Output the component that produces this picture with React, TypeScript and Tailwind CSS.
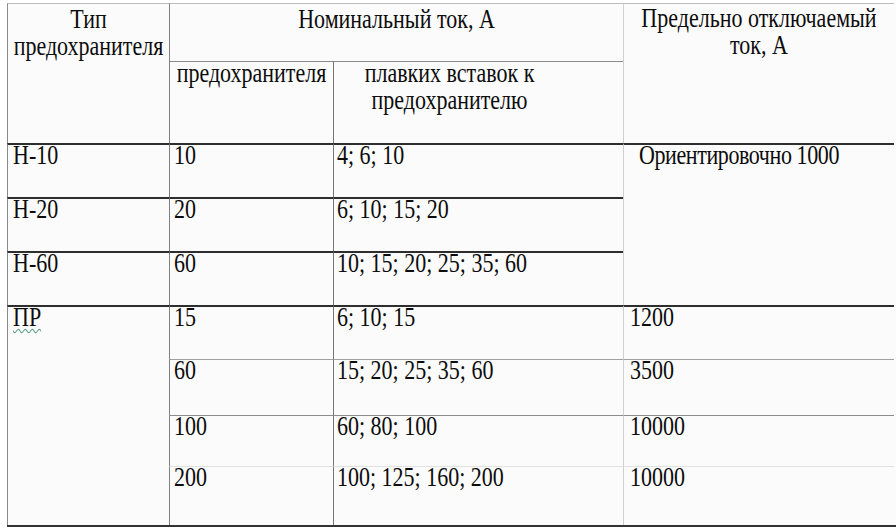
import React from "react";

// text in the picture is stretched vertically, so each cell's text is scaled on Y
const txt = "origin-top scale-y-[1.2] leading-[23px] whitespace-nowrap";

const heavy = "border-t-2 border-t-[#2e2e2e]";

interface CellProps {
  className?: string;
  inner?: string;
  children?: React.ReactNode;
}

function Cell({ className = "", inner = "", children }: CellProps) {
  return (
    <div className={`border-l border-l-[#8a8a8a] ${className}`}>
      <div className={`${txt} ${inner}`}>{children}</div>
    </div>
  );
}

const rows = [
  { type: "Н-10", fuse: "10", links: "4; 6; 10" },
  { type: "Н-20", fuse: "20", links: "6; 10; 15; 20" },
  { type: "Н-60", fuse: "60", links: "10; 15; 20; 25; 35; 60" },
];

const pr = [
  { fuse: "15", links: "6; 10; 15", max: "1200", line: heavy },
  { fuse: "60", links: "15; 20; 25; 35; 60", max: "3500", line: "border-t border-t-[#a0a0a0]" },
  { fuse: "100", links: "60; 80; 100", max: "10000", line: "border-t border-t-[#8c8c8c]" },
  { fuse: "200", links: "100; 125; 160; 200", max: "10000", line: "border-t border-t-[#e2e2e2]" },
];

export default function App() {
  return (
    <div className="w-[896px] h-[532px] bg-white pt-[3px] pl-[7px] text-[22px] text-[#0c0c0c] font-['Liberation_Serif','Times_New_Roman',serif] overflow-hidden">
      <div className="grid grid-cols-[162px_164px_290px_271px] grid-rows-[58px_82px_54px_54px_54px_54px_56px_51px_59px] bg-[#fbfbfb] border-b-2 border-b-[#333]">
        {/* header */}
        <Cell className="row-span-2 border-t border-t-[#bdbdbd]" inner="text-center mt-[1px]">
          Тип
          <br />
          предохранителя
        </Cell>
        <Cell className="col-span-2 border-t border-t-[#bdbdbd] border-l-[#808080]" inner="text-center mt-[1px]">
          Номинальный ток, А
        </Cell>
        <Cell className="row-span-2 border-t border-t-[#bdbdbd] border-l-[#cfcfcf]" inner="text-center">
          Предельно отключаемый
          <br />
          ток, А
        </Cell>
        <Cell className="border-t border-t-[#8a8a8a] border-l-[#808080]" inner="text-center -mt-[3px]">
          предохранителя
        </Cell>
        <Cell className="border-t border-t-[#8a8a8a] border-l-[#777]" inner="text-center pr-[58px] -mt-[3px]">
          плавких вставок к
          <br />
          предохранителю
        </Cell>

        {/* Н series */}
        {rows.map((r, i) => (
          <React.Fragment key={r.type}>
            <Cell className={heavy} inner="pl-[5px] -mt-[4px]">{r.type}</Cell>
            <Cell className={`${heavy} border-l-[#808080]`} inner="pl-[4px] -mt-[4px]">{r.fuse}</Cell>
            <Cell className={`${heavy} border-l-[#777]`} inner="pl-[3px] -mt-[4px]">{r.links}</Cell>
            {i === 0 && (
              <Cell className={`row-span-3 ${heavy} border-l-[#cfcfcf]`} inner="pl-[15px] -mt-[4px] tracking-[-0.4px]">
                Ориентировочно 1000
              </Cell>
            )}
          </React.Fragment>
        ))}

        {/* ПР series */}
        {pr.map((r, i) => (
          <React.Fragment key={r.fuse}>
            {i === 0 && (
              <Cell className={`row-span-4 ${heavy}`} inner="pl-[5px] -mt-[4px]">
                <span className="underline decoration-wavy decoration-[#5e9e8a] decoration-1 underline-offset-[2px]">ПР</span>
              </Cell>
            )}
            <Cell className={`${r.line} border-l-[#808080]`} inner="pl-[4px] -mt-[4px]">{r.fuse}</Cell>
            <Cell className={`${r.line} border-l-[#777]`} inner="pl-[3px] -mt-[4px]">{r.links}</Cell>
            <Cell className={`${r.line} border-l-[#cfcfcf]`} inner="pl-[6px] -mt-[4px]">{r.max}</Cell>
          </React.Fragment>
        ))}
      </div>
    </div>
  );
}
